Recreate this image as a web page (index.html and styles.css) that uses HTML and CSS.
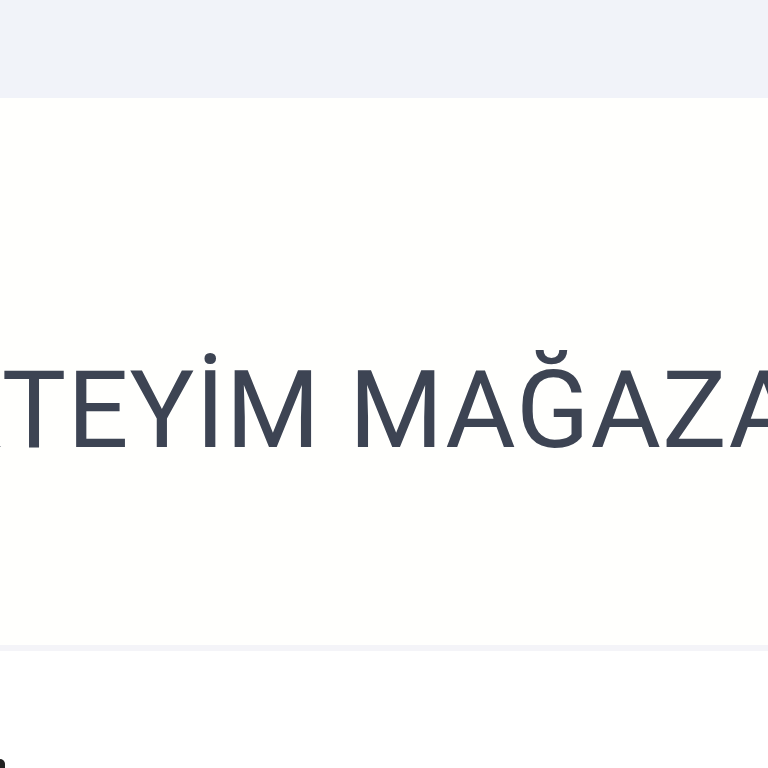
FILE: index.html
```html
<!DOCTYPE html>
<html lang="tr">
<head>
<meta charset="utf-8">
<link rel="stylesheet" href="styles.css">
</head>
<body>
<header class="topbar"></header>
<section class="hero">
  <h1 class="title">KTEYİM MAĞAZA</h1>
</section>
<div class="divider"></div>
<section class="below">
  <span class="dot"></span>
</section>
</body>
</html>
```
FILE: styles.css
```css
html, body {
  margin: 0;
  padding: 0;
  background: #ffffff;
  width: 768px;
  height: 768px;
  overflow: hidden;
}
.topbar {
  height: 98px;
  background: #f1f3f9;
  box-shadow: 0 1px 2px rgba(200, 200, 215, 0.5);
}
.hero {
  height: 547px;
  background: #fffffd;
  display: flex;
  align-items: center;
  overflow: hidden;
}
.title {
  margin: 0 0 0 -67px;
  padding-top: 76px;
  font-family: "Roboto", "Noto Sans", sans-serif;
  font-weight: 400;
  font-size: 108px;
  line-height: 1;
  letter-spacing: 1px;
  color: #3d4453;
  white-space: nowrap;
}
.divider {
  height: 6px;
  background: #f4f4f8;
}
.below {
  height: 117px;
  position: relative;
}
.dot {
  position: absolute;
  left: 0;
  bottom: 0;
  width: 5px;
  height: 9px;
  background: #222222;
  border-top-right-radius: 5px;
}
```
